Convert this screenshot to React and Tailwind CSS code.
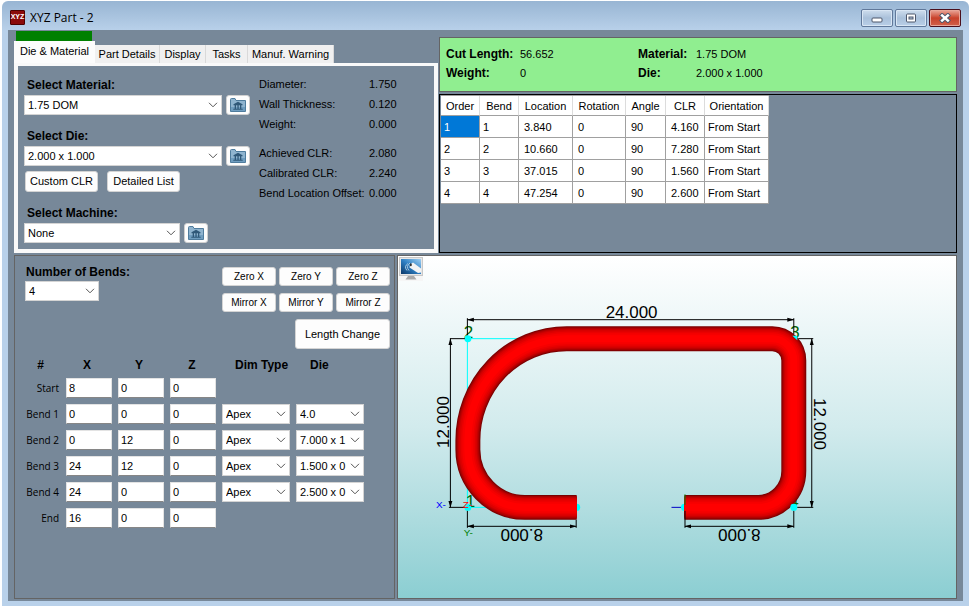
import { useState } from 'react';

const tabs = [
  { name: 'Die & Material', width: 'w-[81px]' },
  { name: 'Part Details', width: 'w-[65px]' },
  { name: 'Display', width: 'w-[46px]' },
  { name: 'Tasks', width: 'w-[42px]' },
  { name: 'Manuf. Warning', width: 'w-[86px]' },
];

const materialSpecs = [
  ['Diameter:', '1.750'],
  ['Wall Thickness:', '0.120'],
  ['Weight:', '0.000'],
];

const dieSpecs = [
  ['Achieved CLR:', '2.080'],
  ['Calibrated CLR:', '2.240'],
  ['Bend Location Offset:', '0.000'],
];

const columns = [
  { name: 'Order', width: 'w-[39px]', pad: 'pl-[3px]' },
  { name: 'Bend', width: 'w-[39px]', pad: 'pl-[3px]' },
  { name: 'Location', width: 'w-[54px]', pad: 'pl-[5px]' },
  { name: 'Rotation', width: 'w-[53px]', pad: 'pl-[5px]' },
  { name: 'Angle', width: 'w-[40px]', pad: 'pl-[5px]' },
  { name: 'CLR', width: 'w-[39px]', pad: 'pl-[5px]' },
  { name: 'Orientation', width: 'w-[64px]', pad: 'pl-[3px]' },
];

const bendRows = [
  ['1', '1', '3.840', '0', '90', '4.160', 'From Start'],
  ['2', '2', '10.660', '0', '90', '7.280', 'From Start'],
  ['3', '3', '37.015', '0', '90', '1.560', 'From Start'],
  ['4', '4', '47.254', '0', '90', '2.600', 'From Start'],
];

const initialPoints = [
  { label: 'Start', xyz: ['8', '0', '0'] },
  { label: 'Bend 1', xyz: ['0', '0', '0'], die: '4.0' },
  { label: 'Bend 2', xyz: ['0', '12', '0'], die: '7.000 x 1' },
  { label: 'Bend 3', xyz: ['24', '12', '0'], die: '1.500 x 0' },
  { label: 'Bend 4', xyz: ['24', '0', '0'], die: '2.500 x 0' },
  { label: 'End', xyz: ['16', '0', '0'] },
];

// Strokes stacked from wide/dark to narrow/bright give the tube its shading
const tubeShades = [
  [25, '#7a0000'],
  [23, '#a00000'],
  [21, '#b80000'],
  [19, '#cc0000'],
  [17, '#dc0000'],
  [14, '#ea0000'],
  [11, '#f60000'],
  [7, '#ff0000'],
];

const tubePath =
  'M577 507.5 H525 A57 58 0 0 1 468 449 V441 A99 102 0 0 1 567 338.5 H773 A21.5 22 0 0 1 794.5 360.5 V471 A35.5 36.5 0 0 1 759 507.5 H685';

function Select({ label, options, className, id }) {
  return (
    <div className={`relative h-5 ${className}`}>
      <select
        id={id}
        aria-label={label}
        className="block h-5 w-full appearance-none border border-[#d4d4d4] bg-white pl-[3px] pr-4 text-[11px] leading-4 text-black outline-none"
      >
        {options.map(o => <option key={o}>{o}</option>)}
      </select>
      <svg viewBox="0 0 10 6" className="pointer-events-none absolute right-1 top-[7px] h-1.5 w-2.5" fill="none" stroke="#555" strokeWidth="1">
        <path d="M1 0.8 L5 4.8 L9 0.8" />
      </svg>
    </div>
  );
}

function BankButton({ label }) {
  return (
    <button aria-label={label} className="flex h-5 w-6 items-center justify-center rounded-[3px] border border-[#d0d0d0] bg-[#fdfdfd]">
      <svg viewBox="0 0 16 14" className="h-3.5 w-4">
        <path d="M0.5 13.5 V1.5 Q0.5 0.5 1.5 0.5 H5 L6 2.5 H15.5 V13.5 Z" fill="#8fb4cf" stroke="#4f7c9d" />
        <path d="M1 9 H15 V13 H1 Z" fill="#6f9dbf" />
        <path d="M8 3.8 L12.5 6.3 V7.2 H3.5 V6.3 Z M4.7 7.2 H6 V10.7 H4.7 Z M7.4 7.2 H8.7 V10.7 H7.4 Z M10 7.2 H11.3 V10.7 H10 Z M3.3 10.7 H12.7 V11.8 H3.3 Z" fill="#2f5878" />
      </svg>
    </button>
  );
}

function PushButton({ children, className }) {
  return (
    <button className={`rounded-[3px] border border-[#d4d4d4] bg-[#fdfdfd] text-center text-black ${className}`}>
      {children}
    </button>
  );
}

function SpecGroup({ rows }) {
  return (
    <dl className="grid grid-cols-[110px_1fr] leading-5">
      {rows.map(([name, value]) => (
        <div key={name} className="contents">
          <dt className="whitespace-nowrap">{name}</dt>
          <dd>{value}</dd>
        </div>
      ))}
    </dl>
  );
}

function TitleBar() {
  return (
    <header className="flex h-[29px] shrink-0 items-center pt-1">
      <span className="ml-0.5 flex size-[15px] items-center justify-center rounded-[1px] border border-[#4d0000] bg-[#8b0a0a] text-[7px] font-bold text-white">XYZ</span>
      <h1 className="ml-[5px] flex-1 pt-px font-['Open_Sans',sans-serif] text-[12px] leading-4">XYZ Part - 2</h1>
      <div className="mr-0.5 flex gap-0.5">
        <button aria-label="Minimize" className="flex h-[18px] w-8 items-center justify-center rounded-[2px] border border-[#60789a] bg-linear-to-b from-[#cfdeee] via-[#a9c0da] via-50% to-[#b9cfe8] shadow-[inset_0_0_0_1px_#d9e6f4]">
          <svg viewBox="0 0 12 10" className="h-2.5 w-3"><rect x="1" y="5" width="10" height="4" rx="1" fill="#fff" stroke="#4c566b" /></svg>
        </button>
        <button aria-label="Maximize" className="flex h-[18px] w-8 items-center justify-center rounded-[2px] border border-[#60789a] bg-linear-to-b from-[#cfdeee] via-[#a9c0da] via-50% to-[#b9cfe8] shadow-[inset_0_0_0_1px_#d9e6f4]">
          <svg viewBox="0 0 12 10" className="h-2.5 w-3" fill="#fff" stroke="#4c566b">
            <rect x="1.5" y="1" width="9" height="8" rx="1" />
            <rect x="4" y="4" width="4" height="2" fill="#b5c8de" />
          </svg>
        </button>
        <button aria-label="Close" className="flex h-[18px] w-8 items-center justify-center rounded-[2px] border border-[#4a0f1c] bg-linear-to-b from-[#e9a79b] via-[#c8402a] via-50% to-[#d0604a] shadow-[inset_0_0_0_1px_#e8a597]">
          <svg viewBox="0 0 12 10" className="h-2.5 w-3">
            <path d="M1.5 1 L10.5 9 M10.5 1 L1.5 9" stroke="#4c566b" strokeWidth="4.4" />
            <path d="M2.2 1.6 L9.8 8.4 M9.8 1.6 L2.2 8.4" stroke="#fff" strokeWidth="2.6" />
          </svg>
        </button>
      </div>
    </header>
  );
}

function DieMaterialPanel() {
  const [active, setActive] = useState('Die & Material');

  return (
    <section className="flex w-[424px] shrink-0 flex-col">
      <div className="ml-0.5 h-[10px] w-[76px] bg-[#008000]" />
      <div role="tablist" className="flex h-[22px] items-end">
        {tabs.map(t => (
          <button
            key={t.name}
            role="tab"
            aria-selected={t.name === active}
            onClick={() => setActive(t.name)}
            className={`whitespace-nowrap text-center leading-4 ${t.width} ${
              t.name === active ? 'h-[22px] bg-[#fcfcfc] pb-0.5' : 'h-[18px] border-r border-[#d9d9d9] bg-[#f0f0f0]'
            }`}
          >
            {t.name}
          </button>
        ))}
      </div>
      <div role="tabpanel" className="flex flex-1 border-x-4 border-b-4 border-t-[3px] border-[#f9f9f9] pl-1.5">
        <div className="w-[235px] shrink-0 pt-3">
          <label htmlFor="material" className="block h-[17px] pl-[3px] text-[12px] font-bold leading-[15px]">Select Material:</label>
          <div className="flex gap-1">
            <Select id="material" options={['1.75 DOM']} className="w-[198px]" />
            <BankButton label="Material library" />
          </div>
          <label htmlFor="die" className="mt-3.5 block h-[17px] pl-[3px] text-[12px] font-bold leading-[15px]">Select Die:</label>
          <div className="flex gap-1">
            <Select id="die" options={['2.000 x 1.000']} className="w-[198px]" />
            <BankButton label="Die library" />
          </div>
          <div className="ml-px mt-[5px] flex gap-[9px]">
            <PushButton className="h-[21px] w-[73px]">Custom CLR</PushButton>
            <PushButton className="h-[21px] w-[73px]">Detailed List</PushButton>
          </div>
          <label htmlFor="machine" className="mt-3.5 block h-[17px] pl-[3px] text-[12px] font-bold leading-[15px]">Select Machine:</label>
          <div className="flex gap-1">
            <Select id="machine" options={['None']} className="w-[156px]" />
            <BankButton label="Machine library" />
          </div>
        </div>
        <div className="flex flex-1 flex-col gap-[9px] pt-2">
          <SpecGroup rows={materialSpecs} />
          <SpecGroup rows={dieSpecs} />
        </div>
      </div>
    </section>
  );
}

function SummaryPanel() {
  return (
    <div className="grid h-[55px] shrink-0 grid-cols-[74px_118px_58px_1fr] content-start border border-[#646464] bg-[#90ee90] px-1.5 pt-[7px] leading-[19px]">
      <b className="text-[12px]">Cut Length:</b>
      <span>56.652</span>
      <b className="text-[12px]">Material:</b>
      <span>1.75 DOM</span>
      <b className="text-[12px]">Weight:</b>
      <span>0</span>
      <b className="text-[12px]">Die:</b>
      <span>2.000 x 1.000</span>
    </div>
  );
}

function BendTable() {
  return (
    <div className="flex-1 border border-black pl-px">
      <table className="w-[328px] table-fixed border-separate border-spacing-0 border-t border-[#a0a0a0] bg-white">
        <thead>
          <tr className="h-5">
            {columns.map(c => (
              <th key={c.name} className={`border-b border-r border-b-[#a0a0a0] border-r-[#dcdcdc] p-0 text-center font-normal leading-4 ${c.width}`}>{c.name}</th>
            ))}
          </tr>
        </thead>
        <tbody>
          {bendRows.map((row, r) => (
            <tr key={row[0]} className="h-[22px]">
              {row.map((cell, c) => (
                <td
                  key={c}
                  className={`whitespace-nowrap border-b border-r border-[#a0a0a0] py-0 pr-0 leading-4 ${columns[c].pad} ${r === 0 && c === 0 ? 'bg-[#0078d7] text-white' : ''}`}
                >
                  {cell}
                </td>
              ))}
            </tr>
          ))}
        </tbody>
      </table>
    </div>
  );
}

function PointsPanel() {
  const [points, setPoints] = useState(initialPoints);

  const handleChange = (row, axis, value) => {
    setPoints(prev => prev.map((p, i) => (i === row ? { ...p, xyz: p.xyz.map((v, a) => (a === axis ? value : v)) } : p)));
  };

  return (
    <section className="w-[381px] shrink-0 border border-[#646464]">
      <div className="flex justify-between pl-2.5 pr-1 pt-2">
        <div>
          <label htmlFor="bends" className="block h-[17px] pl-px text-[12px] font-bold leading-[17px]">Number of Bends:</label>
          <Select id="bends" options={['4']} className="w-[74px]" />
        </div>
        <div className="flex flex-col items-end gap-[7px] pt-[3px] text-[10px]">
          <div className="grid grid-cols-3 gap-x-[3px] gap-y-[7px]">
            {['Zero X', 'Zero Y', 'Zero Z', 'Mirror X', 'Mirror Y', 'Mirror Z'].map(b => (
              <PushButton key={b} className="h-[19px] w-[54px]">{b}</PushButton>
            ))}
          </div>
          <PushButton className="h-[30px] w-[95px] text-[11px]">Length Change</PushButton>
        </div>
      </div>

      <table className="mt-1.5 w-[349px] table-fixed border-collapse">
        <thead>
          <tr className="h-5 text-[12px] leading-5">
            <th className="w-[51px] p-0">#</th>
            <th className="w-[52px] p-0 pr-2.5">X</th>
            <th className="w-[52px] p-0 pr-2.5">Y</th>
            <th className="w-[52px] p-0 pr-2">Z</th>
            <th className="w-[74px] p-0 pl-[13px] text-left">Dim Type</th>
            <th className="w-[68px] p-0 pl-3.5 text-left">Die</th>
          </tr>
        </thead>
        <tbody>
          {points.map((p, row) => (
            <tr key={p.label} className="h-[26px]">
              <th className="p-0 pr-[7px] text-right font-['Open_Sans',sans-serif] text-[10px] font-normal">{p.label}</th>
              {p.xyz.map((v, axis) => (
                <td key={axis} className="p-0">
                  <input
                    type="text"
                    aria-label={`${p.label} ${'XYZ'[axis]}`}
                    value={v}
                    onChange={e => handleChange(row, axis, e.target.value)}
                    className="block h-5 w-[46px] border border-[#e3e3e3] border-b-[#868686] bg-white px-0.5 text-[11px] leading-4 outline-none"
                  />
                </td>
              ))}
              <td className="p-0">{p.die && <Select label={`${p.label} dim type`} options={['Apex']} className="w-[68px]" />}</td>
              <td className="p-0">{p.die && <Select label={`${p.label} die`} options={[p.die]} className="w-[68px]" />}</td>
            </tr>
          ))}
        </tbody>
      </table>
    </section>
  );
}

function Viewer() {
  return (
    <section className="relative flex-1 border border-[#646464] bg-linear-to-b from-white via-[#d2ebed] via-50% to-[#8bced2]">
      <button aria-label="View options" className="absolute left-px top-px size-6 bg-[#f6f6f6]">
        <svg viewBox="0 0 24 24" className="size-6">
          <defs>
            <linearGradient id="screen" x1="0" y1="1" x2="1" y2="0">
              <stop offset="0" stopColor="#0a3767" />
              <stop offset="0.5" stopColor="#2f80c4" />
              <stop offset="1" stopColor="#9fd0f3" />
            </linearGradient>
          </defs>
          <rect x="0.5" y="0.5" width="23" height="18" fill="#e6e6e6" stroke="#c8c8c8" />
          <rect x="2" y="2" width="20" height="15" fill="url(#screen)" />
          <path d="M11 7.5 L14 5.5 L22 11.5 V15.5 L19 16 L10.5 10.5 Z" fill="#f4f4f4" />
          <path d="M9 6.5 Q4.5 9.5 8 13.5 M11 6 Q6.5 9.5 10 13.5" fill="none" stroke="#a9c9e2" />
          <ellipse cx="11.8" cy="7.8" rx="1" ry="1.5" fill="#333" />
          <path d="M9 19 H15 L17.5 22.5 H6.5 Z" fill="#a9a9a9" />
        </svg>
      </button>

      <svg viewBox="398 256 559 342" className="block h-full w-full" fontFamily="Liberation Sans, sans-serif">
        <defs>
          <marker id="arrow" viewBox="0 0 7 5" refX="6.5" refY="2.5" markerWidth="7" markerHeight="5" markerUnits="userSpaceOnUse" orient="auto-start-reverse">
            <path d="M0 0.5 L7 2.5 L0 4.5 Z" fill="#000" />
          </marker>
        </defs>

        {/* Apex lines, vertices and their numbers */}
        <path d="M467.5 507 V338.5 H530 M467.5 507.5 H500" fill="none" stroke="#00ffff" />
        <g fill="#006400" fontSize="17">
          <text x="464" y="338">2</text>
          <text x="791" y="338">3</text>
          <text x="790" y="507">4</text>
          <text x="466" y="507">1</text>
        </g>
        <path d="M672 507.5 H683" stroke="#0000c8" />
        <g fill="#00ffff">
          <circle cx="468" cy="338.5" r="3.5" />
          <circle cx="577" cy="507.5" r="3.5" />
          <circle cx="685" cy="507.5" r="3.5" />
        </g>

        {tubeShades.map(([width, color]) => (
          <path key={width} d={tubePath} fill="none" stroke={color} strokeWidth={width} />
        ))}
        <path d="M793 335.5 H798 V340 Z" fill="#00ffff" />
        <circle cx="468" cy="507.5" r="3.5" fill="#00ffff" />
        <circle cx="794.5" cy="507.5" r="3.5" fill="#00ffff" />
        <path d="M685.5 494.5 V505" stroke="#008000" />

        {/* Dimension lines */}
        <g stroke="#000" fill="none">
          <path d="M467.5 318 V335 M794.5 318 V334 M450 338.5 H465 M449 507.5 H465 M799 338.5 H814 M798 507.5 H814" />
          <path d="M467.5 511 V528 M576.5 520 V528 M685.5 511 V528 M794.5 511 V528" />
          <path d="M467.5 319.5 H794.5" markerStart="url(#arrow)" markerEnd="url(#arrow)" />
          <path d="M450.5 338.5 V507.5" markerStart="url(#arrow)" markerEnd="url(#arrow)" />
          <path d="M812.5 338.5 V507.5" markerStart="url(#arrow)" markerEnd="url(#arrow)" />
          <path d="M467.5 526.5 H576.5" markerStart="url(#arrow)" markerEnd="url(#arrow)" />
          <path d="M685.5 526.5 H794.5" markerStart="url(#arrow)" markerEnd="url(#arrow)" />
        </g>
        <g fill="#000" fontSize="17" textAnchor="middle">
          <text x="632" y="318">24.000</text>
          <text transform="translate(449 422) rotate(-90)">12.000</text>
          <text transform="translate(815 424) rotate(90)">12.000</text>
          <text transform="translate(522 529) rotate(180)">8.000</text>
          <text transform="translate(740 529) rotate(180)">8.000</text>
        </g>

        {/* Origin axes */}
        <g fontSize="10">
          <text x="436" y="508" fill="#0000ff">X-</text>
          <text x="463" y="508" fill="#ff0000">Z-</text>
          <text x="464" y="536" fill="#008000">Y-</text>
        </g>
      </svg>
    </section>
  );
}

export default function App() {
  return (
    <div className="flex min-h-screen bg-white pl-0.5 pr-[3px] pt-px font-['Liberation_Sans',Arial,sans-serif] text-[11px] text-black">
      <div className="flex flex-1 flex-col rounded-t-md bg-[#b9d1ea] bg-linear-to-b from-[#98b5d3] to-[#b9d1ea] to-[30px] px-1.5 pb-[5px]">
        <TitleBar />
        <main className="flex flex-1 flex-col gap-0.5 bg-[#778899] px-1.5 pb-0.5 pt-px">
          <div className="flex h-[222px] gap-px">
            <DieMaterialPanel />
            <div className="flex flex-1 flex-col gap-0.5 pt-1.5">
              <SummaryPanel />
              <BendTable />
            </div>
          </div>
          <div className="flex flex-1 gap-0.5">
            <PointsPanel />
            <Viewer />
          </div>
        </main>
      </div>
    </div>
  );
}
